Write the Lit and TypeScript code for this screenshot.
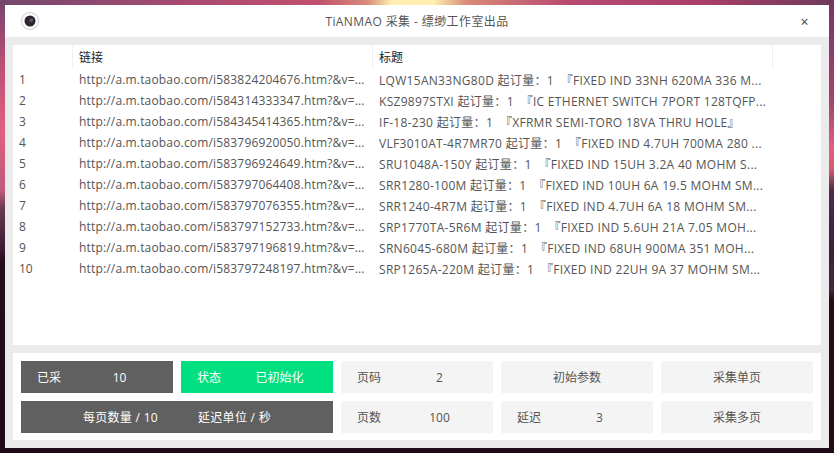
import { LitElement, html, css } from "lit";
import { customElement } from "lit/decorators.js";

const rows: [string, string][] = [
  ["http://a.m.taobao.com/i583824204676.htm?&v=...", "LQW15AN33NG80D 起订量：1  『FIXED IND 33NH 620MA 336 M..."],
  ["http://a.m.taobao.com/i584314333347.htm?&v=...", "KSZ9897STXI 起订量：1  『IC ETHERNET SWITCH 7PORT 128TQFP..."],
  ["http://a.m.taobao.com/i584345414365.htm?&v=...", "IF-18-230 起订量：1  『XFRMR SEMI-TORO 18VA THRU HOLE』"],
  ["http://a.m.taobao.com/i583796920050.htm?&v=...", "VLF3010AT-4R7MR70 起订量：1  『FIXED IND 4.7UH 700MA 280 ..."],
  ["http://a.m.taobao.com/i583796924649.htm?&v=...", "SRU1048A-150Y 起订量：1  『FIXED IND 15UH 3.2A 40 MOHM S..."],
  ["http://a.m.taobao.com/i583797064408.htm?&v=...", "SRR1280-100M 起订量：1  『FIXED IND 10UH 6A 19.5 MOHM SM..."],
  ["http://a.m.taobao.com/i583797076355.htm?&v=...", "SRR1240-4R7M 起订量：1  『FIXED IND 4.7UH 6A 18 MOHM SM..."],
  ["http://a.m.taobao.com/i583797152733.htm?&v=...", "SRP1770TA-5R6M 起订量：1  『FIXED IND 5.6UH 21A 7.05 MOH..."],
  ["http://a.m.taobao.com/i583797196819.htm?&v=...", "SRN6045-680M 起订量：1  『FIXED IND 68UH 900MA 351 MOH..."],
  ["http://a.m.taobao.com/i583797248197.htm?&v=...", "SRP1265A-220M 起订量：1  『FIXED IND 22UH 9A 37 MOHM SM..."],
];

@customElement("app-root")
export class AppRoot extends LitElement {
  static styles = css`
    :host {
      display: block;
      width: 834px;
      height: 453px;
      overflow: hidden;
      box-sizing: border-box;
      padding: 5px;
      font-family: "Open Sans", "Noto Sans CJK SC", sans-serif;
      font-size: 12px;
      background:
        linear-gradient(90deg, #74476c 0%, #a84a72 22%, #c0506e 38%, #d88a78 44%, #ffeeb0 47%, #ffeeb0 52%, #d88a78 56%, #b84a72 68%, #a83e68 85%, #6e3a5c 100%) top / 100% 5px no-repeat,
        linear-gradient(180deg, #74476c 0, #b84c74 60px, #e0607e 130px, #c05a7c 190px, #6a3a55 208px, #3a1a34 250px, #240c1c 262px, #1f0a1a 453px) left / 5px 100% no-repeat,
        linear-gradient(180deg, #7a3560 0, #a04470 100px, #e0607e 150px, #d05a70 170px, #502a48 190px, #3a2038 250px, #4a2440 290px, #240c1c 300px, #1f0a1a 453px) right / 5px 100% no-repeat,
        #1f0a1a;
    }
    .win {
      width: 824px;
      height: 443px;
      background: #ebebeb;
      display: flex;
      flex-direction: column;
    }
    .title {
      height: 32px;
      flex: none;
      background: #fff;
      display: grid;
      grid-template-columns: 40px 1fr 40px;
      align-items: center;
      color: #555;
    }
    .logo { display: flex; justify-content: center; padding-left: 9px; }
    .name { text-align: center; letter-spacing: 0.4px; }
    .close { text-align: center; font-size: 14px; color: #444; padding-right: 9px; }
    .body {
      flex: 1;
      display: flex;
      flex-direction: column;
      gap: 8px;
      padding: 8px;
    }
    .tbl { height: 300px; background: #fff; flex: none; }
    .row { display: grid; grid-template-columns: 60px 300px 400px; height: 21px; align-items: center; color: #555; white-space: pre; }
    .head { height: 24px; color: #222; }
    .head > div { height: 24px; line-height: 25px; border-right: 1px solid #f0f0f0; }
    .head > div:not(:first-child) { padding-left: 6px; }
    .row:not(.head) > div { padding-left: 6px; overflow: hidden; }
    .row:not(.head) > .url { letter-spacing: 0.17px; }
    .row:not(.head) > .txt { letter-spacing: 0.3px; }
    .panel {
      background: #fff;
      height: 87px;
      flex: none;
      box-sizing: border-box;
      padding: 8px;
      display: grid;
      grid-template-columns: repeat(5, 152px);
      grid-template-rows: 32px 32px;
      gap: 8px;
      color: #555;
    }
    .cell { background: #f4f4f4; display: grid; grid-template-columns: 56px 85px; align-items: center; text-align: center; }
    .cell > span:first-child { padding-left: 16px; text-align: left; }
    .cell.one { grid-template-columns: 1fr; }
    .cell.one > span:first-child { padding-left: 0; text-align: center; }
    .dark { background: #606060; color: #fff; }
    .green { background: #00e080; color: #fff; }
    .wide { grid-column: span 2; display: flex; justify-content: center; gap: 40px; letter-spacing: 0.3px; }
    .cell.wide > span:first-child { padding-left: 0; }
  `;
  render() {
    return html`<div class="win">
      <div class="title">
        <div class="logo">
          <svg width="18" height="18" viewBox="0 0 18 18">
            <circle cx="9" cy="9" r="8.5" fill="#fff" stroke="#bbb" stroke-width="0.8"/>
            <circle cx="9" cy="9" r="5.5" fill="#2c2430"/>
            <path d="M8 9a3 3 0 0 1 4-2.5a4 4 0 0 1-1.5 4z" fill="#5a5560"/>
          </svg>
        </div>
        <div class="name">TiANMAO 采集 - 缥缈工作室出品</div>
        <div class="close">×</div>
      </div>
      <div class="body">
        <div class="tbl">
          <div class="row head"><div></div><div>链接</div><div>标题</div></div>
          ${rows.map((r, i) => html`<div class="row"><div>${i + 1}</div><div class="url">${r[0]}</div><div class="txt">${r[1]}</div></div>`)}
        </div>
        <div class="panel">
          <div class="cell dark"><span>已采</span><span>10</span></div>
          <div class="cell green"><span>状态</span><span>已初始化</span></div>
          <div class="cell"><span>页码</span><span>2</span></div>
          <div class="cell one"><span>初始参数</span></div>
          <div class="cell one"><span>采集单页</span></div>
          <div class="cell dark wide"><span>每页数量 / 10</span><span>延迟单位 / 秒</span></div>
          <div class="cell"><span>页数</span><span>100</span></div>
          <div class="cell"><span>延迟</span><span>3</span></div>
          <div class="cell one"><span>采集多页</span></div>
        </div>
      </div>
    </div>`;
  }
}
